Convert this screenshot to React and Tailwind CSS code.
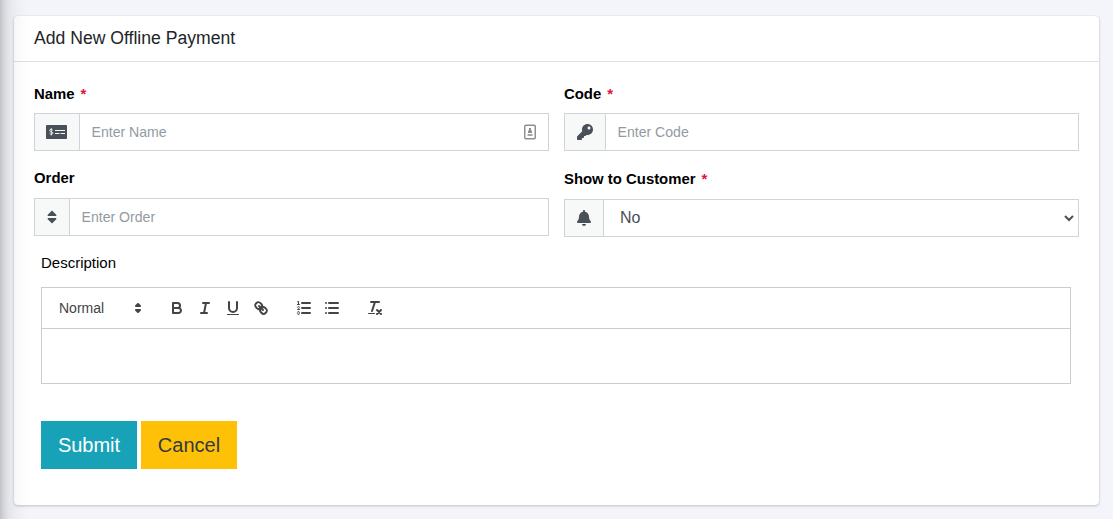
import React from 'react';
import { FaKey, FaSort, FaBell } from 'react-icons/fa';

function Label({ children, required }) {
  return (
    <label className="flex h-[20px] items-center gap-[6px] text-[14.9px] font-bold text-black">
      <span>{children}</span>
      {required && <span className="text-[#dc1444]">*</span>}
    </label>
  );
}

function Group({ icon, addon, children }) {
  return (
    <div className="flex h-[38px] border border-[#ced4da] bg-white">
      <div className={`flex shrink-0 items-center justify-center border-r border-[#ced4da] bg-[#f7f9f9] pr-[1px] text-[#495057] ${addon}`}>
        {icon}
      </div>
      {children}
    </div>
  );
}

function Input({ placeholder }) {
  return (
    <input
      className="min-w-0 flex-1 bg-transparent px-[11.5px] pt-[1px] text-[14.1px] outline-none placeholder:text-[#939ba2]"
      placeholder={placeholder}
    />
  );
}

function MoneyCheck() {
  return (
    <svg viewBox="0 0 21 14" className="h-[14px] w-[21px]" fill="none">
      <rect width="21" height="14" rx="0.8" fill="#495057" />
      <path d="M6.7 5.1C6.4 4.5 5.7 4.3 5.1 4.3 4.3 4.3 3.7 4.7 3.7 5.4c0 1.6 3.2.9 3.2 2.6 0 .8-.7 1.2-1.6 1.2-.7 0-1.4-.3-1.7-.9M5.3 3.2v7.2" stroke="#f7f9f9" strokeWidth="0.9" />
      <path d="M9 5.5h10M9 8.5h4.5M14.5 8.5h4.5" stroke="#f7f9f9" strokeWidth="1" />
    </svg>
  );
}

function ContactBadge() {
  return (
    <svg className="mr-[12px] h-[16px] w-[12px] self-center" viewBox="0 0 12 16">
      <rect x="0.75" y="1.25" width="10.5" height="13.5" rx="1" fill="#fff" stroke="#8f8f8f" strokeWidth="1.5" />
      <path d="M5 4h2v2.5h1V9H4V6.5h1z" fill="#8f8f8f" />
      <path d="M3.5 11h5" stroke="#a5a5a5" strokeWidth="2" />
    </svg>
  );
}

function Tool({ children }) {
  return (
    <button className="flex h-[24px] w-[28px] items-center px-[5px]">
      <svg viewBox="0 0 18 18" className="size-[18px]" fill="none" stroke="#444" strokeWidth="2" strokeLinecap="round" strokeLinejoin="round">
        {children}
      </svg>
    </button>
  );
}

function Toolbar() {
  return (
    <div className="flex h-[41px] items-center border-b border-[#ccc] pl-[9px]">
      <button className="flex h-[24px] w-[98px] items-center justify-between pl-[8px] pr-[2px] text-[14px] font-medium text-[#444]">
        <span>Normal</span>
        <svg viewBox="0 0 18 18" className="size-[18px]" fill="#444" stroke="#444" strokeWidth="2" strokeLinecap="round" strokeLinejoin="round">
          <polygon points="7 11 9 13 11 11 7 11" />
          <polygon points="7 7 9 5 11 7 7 7" />
        </svg>
      </button>
      <div className="ml-[14px] flex">
        <Tool>
          <path d="M5,4H9.5A2.5,2.5,0,0,1,12,6.5v0A2.5,2.5,0,0,1,9.5,9H5A0,0,0,0,1,5,9V4A0,0,0,0,1,5,4Z" />
          <path d="M5,9h5.5A2.5,2.5,0,0,1,13,11.5v0A2.5,2.5,0,0,1,10.5,14H5a0,0,0,0,1,0,0V9A0,0,0,0,1,5,9Z" />
        </Tool>
        <Tool>
          <path d="M7 4h6M5 14h6M8 14l2-10" />
        </Tool>
        <Tool>
          <path d="M5,3V9a4.012,4.012,0,0,0,4,4H9a4.012,4.012,0,0,0,4-4V3" />
          <rect fill="#444" stroke="none" height="1" rx="0.5" ry="0.5" width="12" x="3" y="15" />
        </Tool>
        <Tool>
          <path d="M7 7l4 4" />
          <path d="M8.9,4.577a3.476,3.476,0,0,1,.36,4.679A3.476,3.476,0,0,1,4.577,8.9C3.185,7.5,2.035,6.4,4.217,4.217S7.5,3.185,8.9,4.577Z" />
          <path d="M13.423,9.1a3.476,3.476,0,0,0-4.679-.36,3.476,3.476,0,0,0,.36,4.679c1.392,1.392,2.5,2.542,4.679.36S14.815,10.5,13.423,9.1Z" />
        </Tool>
      </div>
      <div className="ml-[15px] flex">
        <Tool>
          <path d="M7 4h8M7 9h8M7 14h8" />
          <path strokeWidth="1" d="M2.5 5.5h2" />
          <path fill="#444" stroke="none" fillRule="evenodd" d="M3.5,6A0.5,0.5,0,0,1,3,5.5V3.085l-0.276.138A0.5,0.5,0,0,1,2.053,3c-0.124-.247-0.023-0.324.224-0.447l1-.5A0.5,0.5,0,0,1,4,2.5v3A0.5,0.5,0,0,1,3.5,6Z" />
          <path strokeWidth="1" d="M4.5,10.5h-2c0-.234,1.85-1.076,1.85-2.234A0.959,0.959,0,0,0,2.5,8.156" />
          <path strokeWidth="1" d="M2.5,14.846a0.959,0.959,0,0,0,1.85-.109A0.7,0.7,0,0,0,3.75,14a0.688,0.688,0,0,0,.6-0.736,0.959,0.959,0,0,0-1.85-.109" />
        </Tool>
        <Tool>
          <path d="M6 4h9M6 9h9M6 14h9M3 4h0M3 9h0M3 14h0" />
        </Tool>
      </div>
      <div className="ml-[15px] flex">
        <Tool>
          <path d="M5 3h8M6 12l3-9M11 11l4 4M15 11l-4 4" />
          <rect fill="#444" stroke="none" height="1" rx="0.5" ry="0.5" width="7" x="2" y="14" />
        </Tool>
      </div>
    </div>
  );
}

export default function App() {
  return (
    <div className="relative h-[519px] w-full overflow-hidden bg-[#f4f5fa] px-[14px] pt-[16px] font-['Liberation_Sans',Arial,sans-serif]">
      <div className="h-[489px] rounded-[4px] bg-white shadow-[0_0_1px_rgba(0,0,0,0.125),0_1px_3px_rgba(0,0,0,0.2)]">
        <div className="flex h-[46px] items-center border-b border-[#dfdfdf] px-[20px] pb-[1px] text-[17.6px] text-[#212529]">
          <h3>Add New Offline Payment</h3>
        </div>
        <div className="grid grid-cols-2 gap-x-[15px] px-[20px] pt-[22px]">
          <div className="flex flex-col">
            <Label required>Name</Label>
            <div className="mt-[9px]">
              <Group addon="w-[45px]" icon={<MoneyCheck />}>
                <Input placeholder="Enter Name" />
                <ContactBadge />
              </Group>
            </div>
            <div className="mt-[17px]">
              <Label>Order</Label>
            </div>
            <div className="mt-[10px]">
              <Group addon="w-[35px]" icon={<FaSort className="size-[16px]" />}>
                <Input placeholder="Enter Order" />
              </Group>
            </div>
          </div>
          <div className="flex flex-col">
            <Label required>Code</Label>
            <div className="mt-[9px]">
              <Group addon="w-[41px]" icon={<FaKey className="size-[16px]" />}>
                <Input placeholder="Enter Code" />
              </Group>
            </div>
            <div className="mt-[18px]">
              <Label required>Show to Customer</Label>
            </div>
            <div className="mt-[10px]">
              <Group addon="w-[39px]" icon={<FaBell className="size-[16px]" />}>
                <select className="mr-[1px] min-w-0 flex-1 bg-white pb-[2px] pl-[12px] text-[16px] text-[#495057] outline-none">
                  <option>No</option>
                  <option>Yes</option>
                </select>
              </Group>
            </div>
          </div>
        </div>
        <div className="pr-[28px] pl-[27px] pt-[16px]">
          <div className="flex h-[20px] items-center text-[15px] text-black">Description</div>
          <div className="mt-[14px] h-[97px] border border-[#ccc]">
            <Toolbar />
          </div>
          <div className="mt-[37px] flex gap-[4px] text-[20px]">
            <button className="h-[48px] w-[96px] bg-[#17a2b8] text-white">Submit</button>
            <button className="h-[48px] w-[96px] bg-[#ffc107] text-[#343a40]">Cancel</button>
          </div>
        </div>
      </div>
      <div className="pointer-events-none absolute top-[-60px] bottom-[-60px] left-[-20px] w-[20px] shadow-[0_14px_28px_rgba(0,0,0,0.25),0_10px_10px_rgba(0,0,0,0.22)]" />
    </div>
  );
}
